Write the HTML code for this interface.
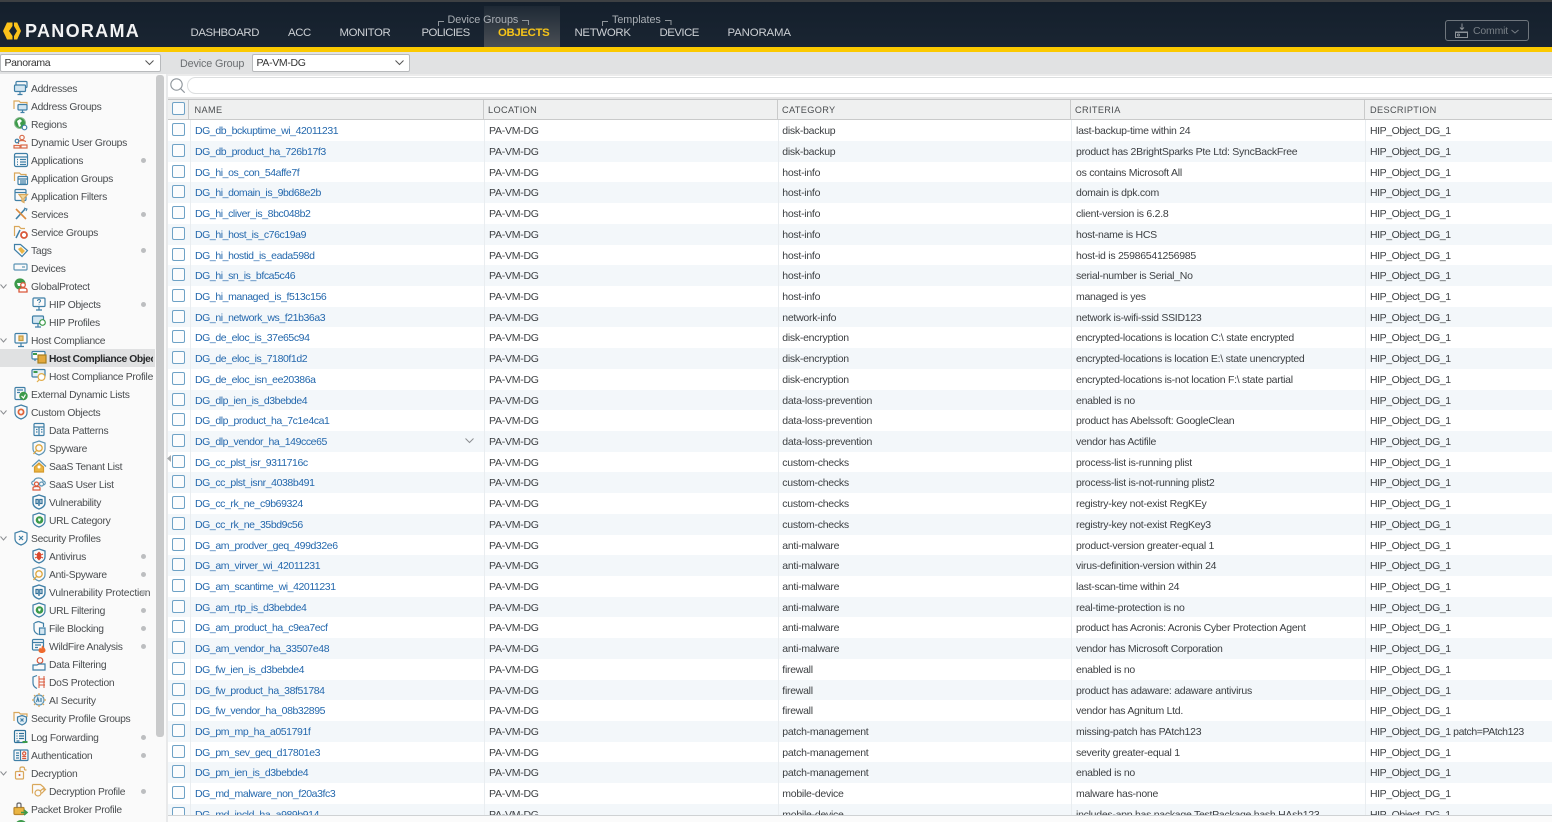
<!DOCTYPE html>
<html><head><meta charset="utf-8"><title>Panorama</title>
<style>
*{box-sizing:border-box}
html,body{margin:0;padding:0;width:1552px;height:822px;overflow:hidden;background:#fff;font-family:"Liberation Sans",sans-serif;font-size:10.5px;color:#3c3f42}
body{filter:blur(.25px)}
.a{position:absolute}
#top{position:absolute;left:0;top:0;width:1552px;height:47px;background:linear-gradient(#141f2c,#1a2532);border-top:2px solid #3d4043}
#yb{position:absolute;left:0;top:47px;width:1552px;height:5px;background:#fbc900}
.n{position:absolute;top:25.5px;font-size:11.4px;line-height:14px;color:#ccd0d4;white-space:nowrap;letter-spacing:-.4px}
.sm{position:absolute;top:14px;font-size:10.8px;line-height:13px;color:#a9aeb4;white-space:nowrap;letter-spacing:-.05px}
#tb{position:absolute;left:0;top:52px;width:1552px;height:22px;background:#e1e2e3}
.sel{position:absolute;top:54px;height:18px;background:#fff;border:1px solid #b8babc;border-radius:2px;font-size:10.5px;line-height:17.5px;padding-left:3.5px;color:#333;letter-spacing:-.33px}
#side{position:absolute;left:0;top:74px;width:166px;height:748px;background:#fafafa;overflow:hidden}
.it{position:absolute;height:18px;line-height:21px;white-space:nowrap;font-size:10.3px;color:#4a4d50;letter-spacing:-.28px}
.it svg{position:absolute;left:-18px;top:1px;width:16px;height:16px;overflow:visible}
.d{position:absolute;left:141px;width:5px;height:5px;border-radius:50%;background:#bcbec0}
.ch{position:absolute;left:0;width:7px;height:5px}
#sb{position:absolute;left:156px;top:75px;width:8px;height:662px;background:#c9cacb;border-radius:3px}
#split{position:absolute;left:166px;top:74px;width:2px;height:748px;background:#e8e9ea}
#srch{position:absolute;left:168px;top:74px;width:1384px;height:25px;background:#fff;border-top:2px solid #ebebeb;border-bottom:2px solid #e6e6e6}
#inp{position:absolute;left:19px;top:1px;width:1400px;height:17px;border:1px solid #dcdedf;border-radius:9px;background:#fff}
#hd{position:absolute;left:168px;top:99px;width:1384px;height:22px;background:#eff0f0;border-top:1px solid #c4c5c6;border-bottom:2px solid #c9caca}
#hd span{position:absolute;top:0;height:19px;line-height:21px;font-size:9.2px;color:#4b4e51;letter-spacing:.35px;border-left:1.5px solid #c9caca;padding-left:4px;white-space:nowrap}
.cb{position:absolute;width:13px;height:13px;border:1.5px solid #6ea2c6;border-radius:2px;background:#f9fbfc}
#tbl{position:absolute;left:168px;top:120.2px;width:1384px;height:695px;overflow:hidden;background:#fff}
.r{position:relative;height:20.72px;line-height:22.4px;white-space:nowrap;background:#fff;letter-spacing:-.27px}
.r:nth-child(even){background:#f3f7fa}
.r span{position:absolute;top:0;height:100%;padding-left:4px;border-left:1px solid #e9edf0;color:#3c3f42}
.r span:nth-of-type(1){left:22px;width:294px;color:#2468ad;letter-spacing:-.42px}
.r span:nth-of-type(2){left:316px;width:294px;letter-spacing:-.25px}
.r span:nth-of-type(3){left:610px;width:293px;padding-left:3.3px}
.r span:nth-of-type(4){left:903px;width:294px}
.r span:nth-of-type(5){left:1197px;width:187px;letter-spacing:-.42px}
.r i{position:absolute;left:4px;top:3px;width:13px;height:13px;border:1.5px solid #6ea2c6;border-radius:2px;background:#fbfcfd}
#ft{position:absolute;left:168px;top:815px;width:1384px;height:7px;background:#fbfbfb;border-top:1px solid #cfd2d4}
</style></head><body>
<svg width="0" height="0" style="position:absolute"><defs>
<g id="mon" fill="none" stroke="#3f7fa6" stroke-width="1.2"><rect x="3" y="1.5" width="11" height="6" rx="1"/><rect x="1.5" y="5" width="11" height="6.5" rx="1" fill="#d4e6f1"/><path d="M7 11.5v2.5M4.5 14.5h5"/></g>
<g id="fold" fill="none" stroke-width="1.2"><path d="M1 11V3h5l1.5 1.5H14v3" stroke="#d9a75a"/><rect x="5" y="6.5" width="9" height="5.5" rx="1" stroke="#3f7fa6" fill="#d4e6f1"/><path d="M9.5 12v2.5M7.5 14.5h4" stroke="#3f7fa6"/></g>
<g id="glob" fill="none"><circle cx="7" cy="7" r="5.5" fill="#3c9a4a" stroke="#8ab98f"/><path d="M4 5l3-2 2 2-2 2 1 3-2 1z" fill="#fff"/><circle cx="11.5" cy="11.5" r="2.3" stroke="#3f7fa6" stroke-width="1.2" fill="#fff"/></g>
<g id="usr" fill="none" stroke-width="1.2"><circle cx="9" cy="3.5" r="2.2" stroke="#d96b4a"/><path d="M5.5 10V8c0-1 1-1.5 3.5-1.5S12.5 7 12.5 8" stroke="#d96b4a"/><circle cx="4" cy="7" r="1.8" stroke="#3f7fa6"/><path d="M1 14v-2.5h6V14zM8 14v-3h6v3z" stroke="#d96b4a"/></g>
<g id="list" fill="none" stroke="#3f7fa6" stroke-width="1.2"><rect x="1.5" y="1.5" width="13" height="13" rx="1.5"/><path d="M1.5 5h13M4 7.5h1M7 7.5h6M4 10h1M7 10h6M4 12.5h1M7 12.5h6"/></g>
<g id="agrp" fill="none" stroke-width="1.2"><path d="M1.5 11V3h5l1.5 1.5H13v2" stroke="#d9a75a"/><rect x="5" y="6.5" width="9.5" height="8" rx="1" stroke="#3f7fa6"/><path d="M5 9h9.5M7 11h6M7 13h6" stroke="#3f7fa6"/></g>
<g id="afil" fill="none" stroke-width="1.2"><rect x="2" y="1.5" width="11" height="11" rx="1.2" stroke="#3f7fa6"/><path d="M2 4.5h11" stroke="#3f7fa6"/><path d="M6 6.5h8.5L11 10.5v4l-2-1v-3z" fill="#f1d9a0" stroke="#d9a75a"/></g>
<g id="tool" fill="none" stroke-width="1.6"><path d="M3 13L12 3" stroke="#3f7fa6"/><path d="M3 3l10 10" stroke="#d98b3f"/><path d="M11 2l3 1-1 2" stroke="#3f7fa6" stroke-width="1"/></g>
<g id="sgrp" fill="none" stroke-width="1.2"><path d="M1.5 12V2.5h4.5L8 4.5h4" stroke="#d9a75a"/><path d="M3 14l4-8" stroke="#3f7fa6" stroke-width="1.5"/><circle cx="11" cy="11" r="3" stroke="#d9583a" stroke-width="1.8" fill="#fff"/></g>
<g id="tag" fill="none" stroke="#3f7fa6" stroke-width="1.2"><path d="M1.5 2.5h6l7 6-5.5 6-7.5-7z"/><path d="M5 7l3-2 4 4-3 3z" fill="#eab543" stroke="none"/></g>
<g id="dev" fill="none" stroke="#5d95b5" stroke-width="1.2"><rect x="1" y="4" width="13" height="6" rx="1"/><path d="M9 7h3"/></g>
<g id="gp" fill="none" stroke-width="1.3"><circle cx="7" cy="6" r="5" fill="#3c9a4a" stroke="#3c9a4a"/><path d="M4 5h4v3H5z" fill="#fff"/><circle cx="10" cy="7" r="2.3" stroke="#d9583a" fill="#fff"/><path d="M6 14v-2c0-1.5 1-2 4-2s4 .5 4 2v2z" stroke="#d9583a" fill="#fff"/></g>
<g id="hipo" fill="none" stroke="#3f7fa6" stroke-width="1.2"><rect x="2" y="2" width="12" height="8.5" rx="1"/><path d="M8 10.5v3M5 14h6"/><path d="M6.5 5c0-2 3-2 3 0 0 1-1.5 1-1.5 2.2M8 8.5v.5" stroke-width="1"/></g>
<g id="hipp" fill="none" stroke-width="1.2"><rect x="1.5" y="2" width="11" height="7.5" rx="1" stroke="#3f7fa6" fill="#d4e6f1"/><path d="M7 9.5v3M4 13h6" stroke="#3f7fa6"/><circle cx="11.5" cy="8.5" r="2.8" stroke="#3c9a4a" fill="#fff"/></g>
<g id="hc" fill="none" stroke-width="1.2"><rect x="2" y="1.5" width="12" height="9.5" rx="1" stroke="#3f7fa6"/><path d="M8 11v3M5 14.5h6" stroke="#3f7fa6"/><rect x="6" y="4" width="4" height="4.5" fill="#e9c77b" stroke="#c99a3e"/></g>
<g id="hco" fill="none" stroke-width="1.2"><rect x="1" y="1.5" width="13" height="7.5" rx="1" stroke="#3f7fa6" fill="#fff"/><path d="M4 9v2" stroke="#3f7fa6"/><rect x="7" y="5" width="8" height="8" fill="#e3a93d" stroke="#a77e1f"/><path d="M2 3h4v2H2z" fill="#3c9a4a" stroke="none"/></g>
<g id="hcp" fill="none" stroke-width="1.2"><rect x="1" y="1.5" width="13" height="7.5" rx="1" stroke="#3f7fa6" fill="#e5f0f6"/><circle cx="10.5" cy="9" r="3.4" stroke="#e2ad4a" fill="#fff"/><path d="M8 12l-2 2" stroke="#e2ad4a"/><path d="M2.5 3h4v2h-4z" fill="#3c9a4a" stroke="none"/></g>
<g id="edl" fill="none" stroke-width="1.2"><rect x="2" y="1.5" width="10" height="12" rx="1" stroke="#3f7fa6"/><path d="M4 4h6M4 6.5h3" stroke="#3f7fa6"/><circle cx="10.5" cy="10" r="4.2" fill="#3c9a4a"/><path d="M8.5 10l2 2 2-3.5" stroke="#fff"/></g>
<g id="shc" fill="none"><path d="M8 1l6 2v6c0 3-3 5-6 6-3-1-6-3-6-6V3z" stroke="#3f7fa6" stroke-width="1.2"/><circle cx="8" cy="8" r="2.6" stroke="#e0643a" stroke-width="1.8"/></g>
<g id="dp" fill="none" stroke="#3f7fa6" stroke-width="1.2"><rect x="3" y="1.5" width="10" height="12" rx="1"/><path d="M3 5h10M8 5v8M5 7.5h1.5M5 10h1.5M10 7.5h1.5M10 10h1.5"/></g>
<g id="spy" fill="none"><path d="M8 1l6 2v6c0 3-3 5-6 6-3-1-6-3-6-6V3z" stroke="#5d95b5" stroke-width="1.2"/><circle cx="8" cy="8" r="3.2" stroke="#dda63c" stroke-width="1.3"/><path d="M5.5 10.5l-3 3.5" stroke="#dda63c" stroke-width="1.3"/></g>
<g id="ten" fill="none" stroke-width="1.2"><path d="M1 8.5L8 2l7 6.5" stroke="#5d95b5" stroke-width="1.3"/><path d="M3.5 14v-5L8 5l4.5 4v5z" fill="#eab543" stroke="#d59a2b"/><circle cx="8" cy="9" r="1.5" fill="#fff"/></g>
<g id="sus" fill="none" stroke-width="1.2"><path d="M3 9C0 9 0 5 3 5c1-4 8-4 9 0 3 0 3 4 0 4" stroke="#5d95b5"/><circle cx="5.5" cy="8" r="2" stroke="#d9583a"/><path d="M2 14v-2c0-1 1-1.5 3.5-1.5S9 11 9 12v2z" stroke="#d9583a"/><circle cx="10.5" cy="8" r="2" stroke="#5d95b5"/></g>
<g id="vul" fill="none"><path d="M8 1l6 2v6c0 3-3 5-6 6-3-1-6-3-6-6V3z" stroke="#3f7fa6" stroke-width="1.4"/><path d="M5 5.500h2.200v4H5zM8.800 5.500H11v4H8.800zM7 11h2" stroke="#2e6f98" stroke-width="1.2"/></g>
<g id="url" fill="none"><path d="M8 1l6 2v6c0 3-3 5-6 6-3-1-6-3-6-6V3z" stroke="#3f7fa6" stroke-width="1.2"/><circle cx="8.5" cy="8" r="3.8" fill="#3c9a4a"/><path d="M7 6.5h3l-1 3-1.500-.5z" fill="#fff"/></g>
<g id="sec" fill="none" stroke="#3f7fa6" stroke-width="1.2"><path d="M8 1l6 2v6c0 3-3 5-6 6-3-1-6-3-6-6V3z"/><path d="M6 6l4 4M10 6l-4 4"/></g>
<g id="av" fill="none"><path d="M8 1l6 2v6c0 3-3 5-6 6-3-1-6-3-6-6V3z" stroke="#3f7fa6" stroke-width="1.3"/><path d="M8 3.500l2 2v5l-2 2-2-2v-5z" fill="#d9482e"/><path d="M4 6l2 1M12 6l-2 1M4 10l2-1M12 10l-2-1" stroke="#d9482e"/></g>
<g id="fb" fill="none" stroke-width="1.2"><path d="M7.500 1.500l5 1.800V7M3.500 2.800L7.500 1.500M3 3v6c0 2.500 2 4.500 4.500 5.500" stroke="#3f7fa6"/><rect x="8.500" y="8" width="5.500" height="6.500" fill="#d4e6f1" stroke="#3f7fa6"/></g>
<g id="wf" fill="none" stroke-width="1.2"><rect x="1.500" y="1.500" width="11" height="10.500" rx="1" stroke="#3f7fa6"/><path d="M1.500 4.500h11M4 7h6M4 9.500h3" stroke="#3f7fa6"/><path d="M11 7c1 2 3.500 3.200 3.500 5.500 0 1.300-1.500 2.500-3.500 2.500s-3.500-1-3.500-2.500c0-1.500 1-2 1.500-3 .5.500 1 1 1.200 1.300.3-1 .8-2.500.8-3.800z" fill="#ee6a2e"/></g>
<g id="dfl" fill="none" stroke-width="1.2"><circle cx="9" cy="4.500" r="2.800" stroke="#d9583a"/><path d="M2 9h4l2-1h6v6H2z" stroke="#3f7fa6"/></g>
<g id="dos" fill="none" stroke-width="1.2"><path d="M6 1.500L2 3v6c0 2.500 2 4.500 4 5.500" stroke="#3f7fa6"/><path d="M8 2v12M13 2v12M8 5h6M8 8h6M8 11h6" stroke="#d9583a" stroke-width="1"/></g>
<g id="ai" fill="none" stroke-width="1.2"><circle cx="8" cy="8" r="5" stroke="#5d95b5" fill="#e3eff6"/><path d="M8 1v2M8 13v2M1 8h2M13 8h2M3 3l1.500 1.500M13 3l-1.500 1.500M3 13l1.500-1.500M13 13l-1.500-1.500" stroke="#d9a75a"/><path d="M5.500 10l1.300-4 1.300 4M10 6v4" stroke="#3f7fa6"/></g>
<g id="spg" fill="none" stroke-width="1.2"><path d="M1 11V2.500h5L7.500 4H14v3" stroke="#d9a75a"/><path d="M9 5.500l4.500 1.500v3.500c0 2-2 3.500-4.500 4.500-2.500-1-4.500-2.500-4.500-4.500V7z" stroke="#3f7fa6" fill="#e3eff6"/><path d="M7.500 8.500l3 3M10.500 8.500l-3 3" stroke="#3f7fa6"/></g>
<g id="log" fill="none" stroke-width="1.2"><rect x="1.500" y="1.500" width="11" height="12" rx="1" stroke="#2d7199"/><path d="M3.500 4.500h1M6 4.500h5M3.500 7h1M6 7h5M3.500 9.500h1M6 9.500h5M3.500 12h3" stroke="#2d7199"/><path d="M9.500 13h5" stroke="#3c9a4a" stroke-width="2"/></g>
<g id="auth" fill="none" stroke-width="1.2"><rect x="1" y="3" width="14" height="10.500" rx="1" stroke="#3f7fa6"/><path d="M7.500 3v10.500M3 6h3M3 8.500h3M3 11h3" stroke="#3f7fa6"/><circle cx="11.200" cy="6.500" r="1.600" stroke="#d9583a"/><path d="M9.200 11.500h4M9.200 9.500h4" stroke="#d9583a"/></g>
<g id="dec" fill="none" stroke="#d9a75a" stroke-width="1.2"><rect x="2.500" y="6.500" width="8" height="7.500" rx="1"/><path d="M7 6.500V3.500c0-2 4.500-2 4.500 0v1.500M11.500 5h2"/><circle cx="6.500" cy="10" r="1" fill="#d9583a" stroke="none"/></g>
<g id="dcp" fill="none" stroke="#d9a75a" stroke-width="1.2"><path d="M1.500 1.500h8l3.500 3v3"/><path d="M1.500 1.500v9"/><circle cx="7" cy="10" r="3"/><path d="M9 8l4-3 1.500 1.500-4 4"/></g>
<g id="pb" fill="none" stroke-width="1.2"><rect x="1" y="6.500" width="10" height="7" rx="1" fill="#eab543" stroke="#b8862c"/><path d="M4 6.500V3.500c0-2 4-2 4 0v3" stroke="#666"/><path d="M8 11.500h5M11 9l3 2.500-3 2.500" stroke="#3c9a4a" stroke-width="1.6"/></g>
</defs></svg>

<div id="top"></div>
<div id="yb"></div>
<div class="a" style="left:484px;top:6px;width:76px;height:41px;background:linear-gradient(#1e2935,#4a4f55)"></div>
<svg class="a" style="left:3px;top:22px;width:18px;height:18px" viewBox="0 0 18 18"><path d="M4 0.500H9.500V4L6 9l3.500 5v3.500H4L0 9z" fill="#fbc21a"/><path d="M11 .5h3.200L18 9l-3.800 8.500H11V14l3-5-3-5z" fill="#fbc21a"/></svg>
<div class="a" style="left:25px;top:20.5px;font-size:18px;line-height:21px;font-weight:bold;color:#f2f3f4;letter-spacing:1.3px;white-space:nowrap">PANORAMA</div>
<div class="n" style="left:190.5px">DASHBOARD</div>
<div class="n" style="left:288px">ACC</div>
<div class="n" style="left:339.5px">MONITOR</div>
<div class="n" style="left:421.5px;letter-spacing:-.55px">POLICIES</div>
<div class="n" style="left:498px;color:#f7c418;font-weight:bold;letter-spacing:-.35px">OBJECTS</div>
<div class="n" style="left:574.5px;letter-spacing:-.3px">NETWORK</div>
<div class="n" style="left:659.5px;letter-spacing:-.5px">DEVICE</div>
<div class="n" style="left:727.5px;letter-spacing:-.12px">PANORAMA</div>
<div class="sm" style="left:447.5px">Device Groups</div>
<div class="sm" style="left:612px">Templates</div>
<svg class="a" style="left:430px;top:13px;width:246px;height:14px" fill="none" stroke="#8e949a"><path d="M8.500 13V8.500H14M92 7.500h6.500V12M172.500 13V8.500H178M235 7.500h6V12"/></svg>
<div class="a" style="left:1445px;top:20px;width:84px;height:21px;border:1.5px solid #6f767d;border-radius:3px;background:#1b2633"></div>
<svg class="a" style="left:1454px;top:23px;width:16px;height:16px" fill="none" stroke="#8d9399"><path d="M8 .5v6M6 4.500l2 2 2-2M1 9h13M1.500 9.500h12v5h-12z"/><circle cx="4.500" cy="12" r="1"/></svg>
<div class="a" style="left:1473px;top:24.5px;font-size:10.5px;line-height:13px;color:#787f86;letter-spacing:-.2px">Commit</div>
<svg class="a" style="left:1511px;top:29px;width:8px;height:5px" fill="none" stroke="#787f86"><path d="M.5 1l3.500 3L7.500 1"/></svg>

<div id="tb"></div>
<div class="sel" style="left:0;width:161px">Panorama</div>
<svg class="a" style="left:145px;top:60px;width:9px;height:6px" fill="none" stroke="#555"><path d="M.5 .5L4.500 4.500 8.500 .5"/></svg>
<div class="a" style="left:180px;top:56.5px;font-size:10.8px;line-height:14px;color:#6c6f72;letter-spacing:-.15px">Device Group</div>
<div class="sel" style="left:252px;width:158px">PA-VM-DG</div>
<svg class="a" style="left:395px;top:60px;width:9px;height:6px" fill="none" stroke="#555"><path d="M.5 .5L4.500 4.500 8.500 .5"/></svg>

<div id="side"></div>
<div class="a" style="left:0;top:349px;width:155px;height:18px;background:#e0e1e2"></div>
<div class="it" style="left:31px;top:79px"><svg viewBox="0 0 16 16"><use href="#mon"/></svg>Addresses</div>
<div class="it" style="left:31px;top:97px"><svg viewBox="0 0 16 16"><use href="#fold"/></svg>Address Groups</div>
<div class="it" style="left:31px;top:115px"><svg viewBox="0 0 16 16"><use href="#glob"/></svg>Regions</div>
<div class="it" style="left:31px;top:133px"><svg viewBox="0 0 16 16"><use href="#usr"/></svg>Dynamic User Groups</div>
<div class="it" style="left:31px;top:151px"><svg viewBox="0 0 16 16"><use href="#list"/></svg>Applications</div>
<div class="it" style="left:31px;top:169px"><svg viewBox="0 0 16 16"><use href="#agrp"/></svg>Application Groups</div>
<div class="it" style="left:31px;top:187px"><svg viewBox="0 0 16 16"><use href="#afil"/></svg>Application Filters</div>
<div class="it" style="left:31px;top:205px"><svg viewBox="0 0 16 16"><use href="#tool"/></svg>Services</div>
<div class="it" style="left:31px;top:223px"><svg viewBox="0 0 16 16"><use href="#sgrp"/></svg>Service Groups</div>
<div class="it" style="left:31px;top:241px"><svg viewBox="0 0 16 16"><use href="#tag"/></svg>Tags</div>
<div class="it" style="left:31px;top:259px"><svg viewBox="0 0 16 16"><use href="#dev"/></svg>Devices</div>
<div class="it" style="left:31px;top:277px"><svg viewBox="0 0 16 16"><use href="#gp"/></svg>GlobalProtect</div>
<div class="it" style="left:49px;top:295px"><svg viewBox="0 0 16 16"><use href="#hipo"/></svg>HIP Objects</div>
<div class="it" style="left:49px;top:313px"><svg viewBox="0 0 16 16"><use href="#hipp"/></svg>HIP Profiles</div>
<div class="it" style="left:31px;top:331px"><svg viewBox="0 0 16 16"><use href="#hc"/></svg>Host Compliance</div>
<div class="it" style="left:49px;top:349px;color:#26282a;font-weight:bold;letter-spacing:-.42px"><svg viewBox="0 0 16 16"><use href="#hco"/></svg><span style="display:block;width:104px;overflow:hidden">Host Compliance Objects</span></div>
<div class="it" style="left:49px;top:367px"><svg viewBox="0 0 16 16"><use href="#hcp"/></svg>Host Compliance Profile</div>
<div class="it" style="left:31px;top:385px"><svg viewBox="0 0 16 16"><use href="#edl"/></svg>External Dynamic Lists</div>
<div class="it" style="left:31px;top:403px"><svg viewBox="0 0 16 16"><use href="#shc"/></svg>Custom Objects</div>
<div class="it" style="left:49px;top:421px"><svg viewBox="0 0 16 16"><use href="#dp"/></svg>Data Patterns</div>
<div class="it" style="left:49px;top:439px"><svg viewBox="0 0 16 16"><use href="#spy"/></svg>Spyware</div>
<div class="it" style="left:49px;top:457px"><svg viewBox="0 0 16 16"><use href="#ten"/></svg>SaaS Tenant List</div>
<div class="it" style="left:49px;top:475px"><svg viewBox="0 0 16 16"><use href="#sus"/></svg>SaaS User List</div>
<div class="it" style="left:49px;top:493px"><svg viewBox="0 0 16 16"><use href="#vul"/></svg>Vulnerability</div>
<div class="it" style="left:49px;top:511px"><svg viewBox="0 0 16 16"><use href="#url"/></svg>URL Category</div>
<div class="it" style="left:31px;top:529px"><svg viewBox="0 0 16 16"><use href="#sec"/></svg>Security Profiles</div>
<div class="it" style="left:49px;top:547px"><svg viewBox="0 0 16 16"><use href="#av"/></svg>Antivirus</div>
<div class="it" style="left:49px;top:565px"><svg viewBox="0 0 16 16"><use href="#spy"/></svg>Anti-Spyware</div>
<div class="it" style="left:49px;top:583px;letter-spacing:-.15px"><svg viewBox="0 0 16 16"><use href="#vul"/></svg>Vulnerability Protection</div>
<div class="it" style="left:49px;top:601px"><svg viewBox="0 0 16 16"><use href="#url"/></svg>URL Filtering</div>
<div class="it" style="left:49px;top:619px"><svg viewBox="0 0 16 16"><use href="#fb"/></svg>File Blocking</div>
<div class="it" style="left:49px;top:637px"><svg viewBox="0 0 16 16"><use href="#wf"/></svg>WildFire Analysis</div>
<div class="it" style="left:49px;top:655px"><svg viewBox="0 0 16 16"><use href="#dfl"/></svg>Data Filtering</div>
<div class="it" style="left:49px;top:673px"><svg viewBox="0 0 16 16"><use href="#dos"/></svg>DoS Protection</div>
<div class="it" style="left:49px;top:691px"><svg viewBox="0 0 16 16"><use href="#ai"/></svg>AI Security</div>
<div class="it" style="left:31px;top:709px"><svg viewBox="0 0 16 16"><use href="#spg"/></svg>Security Profile Groups</div>
<div class="it" style="left:31px;top:728px"><svg viewBox="0 0 16 16"><use href="#log"/></svg>Log Forwarding</div>
<div class="it" style="left:31px;top:746px"><svg viewBox="0 0 16 16"><use href="#auth"/></svg>Authentication</div>
<div class="it" style="left:31px;top:764px"><svg viewBox="0 0 16 16"><use href="#dec"/></svg>Decryption</div>
<div class="it" style="left:49px;top:782px"><svg viewBox="0 0 16 16"><use href="#dcp"/></svg>Decryption Profile</div>
<div class="it" style="left:31px;top:800px"><svg viewBox="0 0 16 16"><use href="#pb"/></svg>Packet Broker Profile</div>
<svg class="a" style="left:13px;top:819px;width:16px;height:3px"><circle cx="8" cy="7" r="6" fill="#3c9a4a"/></svg>

<div class="d" style="top:158px"></div><div class="d" style="top:212px"></div><div class="d" style="top:248px"></div><div class="d" style="top:302px"></div><div class="d" style="top:554px"></div><div class="d" style="top:572px"></div><div class="d" style="top:590px"></div><div class="d" style="top:608px"></div><div class="d" style="top:626px"></div><div class="d" style="top:644px"></div><div class="d" style="top:735px"></div><div class="d" style="top:753px"></div><div class="d" style="top:789px"></div>

<svg class="ch" style="top:284px" fill="none" stroke="#8b8e91"><path d="M.5 .5L3.500 4 6.500 .5"/></svg>
<svg class="ch" style="top:338px" fill="none" stroke="#8b8e91"><path d="M.5 .5L3.500 4 6.500 .5"/></svg>
<svg class="ch" style="top:410px" fill="none" stroke="#8b8e91"><path d="M.5 .5L3.500 4 6.500 .5"/></svg>
<svg class="ch" style="top:536px" fill="none" stroke="#8b8e91"><path d="M.5 .5L3.500 4 6.500 .5"/></svg>
<svg class="ch" style="top:771px" fill="none" stroke="#8b8e91"><path d="M.5 .5L3.500 4 6.500 .5"/></svg>

<div id="sb"></div>
<div id="split"></div>

<div id="srch"><div id="inp"></div></div>
<svg class="a" style="left:169px;top:77px;width:17px;height:17px" fill="none" stroke="#8f969c" stroke-width="1.1"><circle cx="7.500" cy="7.500" r="5.700"/><path d="M11.700 11.700l4 4"/></svg>

<div id="hd"><span style="left:20px;padding-left:5.5px">NAME</span><span style="left:315px">LOCATION</span><span style="left:609px;padding-left:4px">CATEGORY</span><span style="left:902px;padding-left:4px">CRITERIA</span><span style="left:1196px;padding-left:5px">DESCRIPTION</span></div>
<div class="cb" style="left:172px;top:102px"></div>

<div id="tbl">
<div class="r"><i></i><span>DG_db_bckuptime_wi_42011231</span><span>PA-VM-DG</span><span>disk-backup</span><span>last-backup-time within 24</span><span>HIP_Object_DG_1</span></div>
<div class="r"><i></i><span>DG_db_product_ha_726b17f3</span><span>PA-VM-DG</span><span>disk-backup</span><span>product has 2BrightSparks Pte Ltd: SyncBackFree</span><span>HIP_Object_DG_1</span></div>
<div class="r"><i></i><span>DG_hi_os_con_54affe7f</span><span>PA-VM-DG</span><span>host-info</span><span>os contains Microsoft All</span><span>HIP_Object_DG_1</span></div>
<div class="r"><i></i><span>DG_hi_domain_is_9bd68e2b</span><span>PA-VM-DG</span><span>host-info</span><span>domain is dpk.com</span><span>HIP_Object_DG_1</span></div>
<div class="r"><i></i><span>DG_hi_cliver_is_8bc048b2</span><span>PA-VM-DG</span><span>host-info</span><span>client-version is 6.2.8</span><span>HIP_Object_DG_1</span></div>
<div class="r"><i></i><span>DG_hi_host_is_c76c19a9</span><span>PA-VM-DG</span><span>host-info</span><span>host-name is HCS</span><span>HIP_Object_DG_1</span></div>
<div class="r"><i></i><span>DG_hi_hostid_is_eada598d</span><span>PA-VM-DG</span><span>host-info</span><span>host-id is 25986541256985</span><span>HIP_Object_DG_1</span></div>
<div class="r"><i></i><span>DG_hi_sn_is_bfca5c46</span><span>PA-VM-DG</span><span>host-info</span><span>serial-number is Serial_No</span><span>HIP_Object_DG_1</span></div>
<div class="r"><i></i><span>DG_hi_managed_is_f513c156</span><span>PA-VM-DG</span><span>host-info</span><span>managed is yes</span><span>HIP_Object_DG_1</span></div>
<div class="r"><i></i><span>DG_ni_network_ws_f21b36a3</span><span>PA-VM-DG</span><span>network-info</span><span>network is-wifi-ssid SSID123</span><span>HIP_Object_DG_1</span></div>
<div class="r"><i></i><span>DG_de_eloc_is_37e65c94</span><span>PA-VM-DG</span><span>disk-encryption</span><span>encrypted-locations is location C:\ state encrypted</span><span>HIP_Object_DG_1</span></div>
<div class="r"><i></i><span>DG_de_eloc_is_7180f1d2</span><span>PA-VM-DG</span><span>disk-encryption</span><span>encrypted-locations is location E:\ state unencrypted</span><span>HIP_Object_DG_1</span></div>
<div class="r"><i></i><span>DG_de_eloc_isn_ee20386a</span><span>PA-VM-DG</span><span>disk-encryption</span><span>encrypted-locations is-not location F:\ state partial</span><span>HIP_Object_DG_1</span></div>
<div class="r"><i></i><span>DG_dlp_ien_is_d3bebde4</span><span>PA-VM-DG</span><span>data-loss-prevention</span><span>enabled is no</span><span>HIP_Object_DG_1</span></div>
<div class="r"><i></i><span>DG_dlp_product_ha_7c1e4ca1</span><span>PA-VM-DG</span><span>data-loss-prevention</span><span>product has Abelssoft: GoogleClean</span><span>HIP_Object_DG_1</span></div>
<div class="r"><i></i><span>DG_dlp_vendor_ha_149cce65</span><span>PA-VM-DG</span><span>data-loss-prevention</span><span>vendor has Actifile</span><span>HIP_Object_DG_1</span></div>
<div class="r"><i></i><span>DG_cc_plst_isr_9311716c</span><span>PA-VM-DG</span><span>custom-checks</span><span>process-list is-running plist</span><span>HIP_Object_DG_1</span></div>
<div class="r"><i></i><span>DG_cc_plst_isnr_4038b491</span><span>PA-VM-DG</span><span>custom-checks</span><span>process-list is-not-running plist2</span><span>HIP_Object_DG_1</span></div>
<div class="r"><i></i><span>DG_cc_rk_ne_c9b69324</span><span>PA-VM-DG</span><span>custom-checks</span><span>registry-key not-exist RegKEy</span><span>HIP_Object_DG_1</span></div>
<div class="r"><i></i><span>DG_cc_rk_ne_35bd9c56</span><span>PA-VM-DG</span><span>custom-checks</span><span>registry-key not-exist RegKey3</span><span>HIP_Object_DG_1</span></div>
<div class="r"><i></i><span>DG_am_prodver_geq_499d32e6</span><span>PA-VM-DG</span><span>anti-malware</span><span>product-version greater-equal 1</span><span>HIP_Object_DG_1</span></div>
<div class="r"><i></i><span>DG_am_virver_wi_42011231</span><span>PA-VM-DG</span><span>anti-malware</span><span>virus-definition-version within 24</span><span>HIP_Object_DG_1</span></div>
<div class="r"><i></i><span>DG_am_scantime_wi_42011231</span><span>PA-VM-DG</span><span>anti-malware</span><span>last-scan-time within 24</span><span>HIP_Object_DG_1</span></div>
<div class="r"><i></i><span>DG_am_rtp_is_d3bebde4</span><span>PA-VM-DG</span><span>anti-malware</span><span>real-time-protection is no</span><span>HIP_Object_DG_1</span></div>
<div class="r"><i></i><span>DG_am_product_ha_c9ea7ecf</span><span>PA-VM-DG</span><span>anti-malware</span><span>product has Acronis: Acronis Cyber Protection Agent</span><span>HIP_Object_DG_1</span></div>
<div class="r"><i></i><span>DG_am_vendor_ha_33507e48</span><span>PA-VM-DG</span><span>anti-malware</span><span>vendor has Microsoft Corporation</span><span>HIP_Object_DG_1</span></div>
<div class="r"><i></i><span>DG_fw_ien_is_d3bebde4</span><span>PA-VM-DG</span><span>firewall</span><span>enabled is no</span><span>HIP_Object_DG_1</span></div>
<div class="r"><i></i><span>DG_fw_product_ha_38f51784</span><span>PA-VM-DG</span><span>firewall</span><span>product has adaware: adaware antivirus</span><span>HIP_Object_DG_1</span></div>
<div class="r"><i></i><span>DG_fw_vendor_ha_08b32895</span><span>PA-VM-DG</span><span>firewall</span><span>vendor has Agnitum Ltd.</span><span>HIP_Object_DG_1</span></div>
<div class="r"><i></i><span>DG_pm_mp_ha_a051791f</span><span>PA-VM-DG</span><span>patch-management</span><span>missing-patch has PAtch123</span><span>HIP_Object_DG_1 patch=PAtch123</span></div>
<div class="r"><i></i><span>DG_pm_sev_geq_d17801e3</span><span>PA-VM-DG</span><span>patch-management</span><span>severity greater-equal 1</span><span>HIP_Object_DG_1</span></div>
<div class="r"><i></i><span>DG_pm_ien_is_d3bebde4</span><span>PA-VM-DG</span><span>patch-management</span><span>enabled is no</span><span>HIP_Object_DG_1</span></div>
<div class="r"><i></i><span>DG_md_malware_non_f20a3fc3</span><span>PA-VM-DG</span><span>mobile-device</span><span>malware has-none</span><span>HIP_Object_DG_1</span></div>
<div class="r"><i></i><span>DG_md_incld_ha_a989b914</span><span>PA-VM-DG</span><span>mobile-device</span><span>includes-app has package TestPackage hash HAsh123</span><span>HIP_Object_DG_1</span></div>
</div>
<div id="ft"></div>
<svg class="a" style="left:465px;top:438px;width:9px;height:6px" fill="none" stroke="#8b8e91"><path d="M.5 .5L4.500 4.500 8.500 .5"/></svg>
<svg class="a" style="left:167px;top:455px;width:4px;height:7px"><path d="M4 0L0 3.500 4 7z" fill="#a5a8aa"/></svg>
</body></html>
